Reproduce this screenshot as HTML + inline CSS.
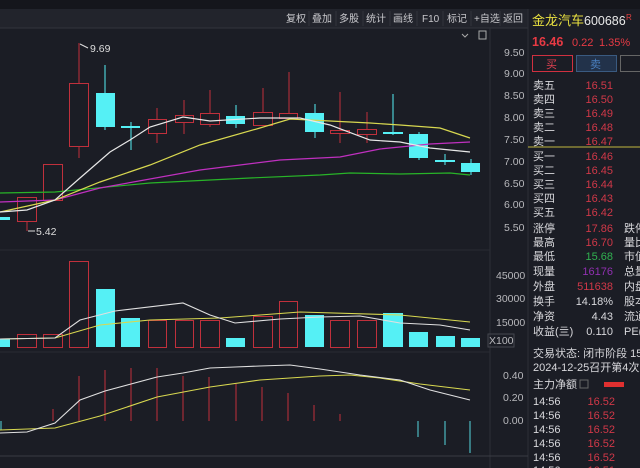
<!DOCTYPE html>
<html><head><meta charset="utf-8"><style>
html,body{margin:0;padding:0;background:#1b1d25;width:640px;height:468px;overflow:hidden}
svg{display:block}
text{font-family:"Liberation Sans","Noto Sans CJK SC",sans-serif}
</style></head><body>
<svg width="640" height="468" viewBox="0 0 640 468" xmlns="http://www.w3.org/2000/svg">
<rect width="640" height="468" fill="#1b1d25"/>
<rect width="640" height="9" fill="#15161c"/>
<rect x="0" y="9" width="528" height="19" fill="#22242c"/>
<line x1="0" y1="28" x2="528" y2="28" stroke="#33353d"/>
<g font-size="10" fill="#c8c8cc">
<text x="286" y="22">复权</text><text x="312" y="22">叠加</text><text x="339" y="22">多股</text><text x="366" y="22">统计</text><text x="393" y="22">画线</text><text x="422" y="22">F10</text><text x="447" y="22">标记</text><text x="474" y="22">+自选</text><text x="503" y="22">返回</text>
</g>
<g stroke="#33353d"><line x1="309" y1="11" x2="309" y2="26"/><line x1="336" y1="11" x2="336" y2="26"/><line x1="363" y1="11" x2="363" y2="26"/><line x1="390" y1="11" x2="390" y2="26"/><line x1="417" y1="11" x2="417" y2="26"/><line x1="443" y1="11" x2="443" y2="26"/><line x1="471" y1="11" x2="471" y2="26"/><line x1="500" y1="11" x2="500" y2="26"/></g>
<path d="M462 34l3 3 3-3" stroke="#aaa" fill="none"/><rect x="479" y="31" width="7" height="8" fill="none" stroke="#aaa"/>
<line x1="490" y1="28" x2="490" y2="468" stroke="#2c2e36"/>
<line x1="528" y1="9" x2="528" y2="468" stroke="#2c2e36"/>
<line x1="0" y1="250" x2="490" y2="250" stroke="#2a2c34"/>
<line x1="0" y1="352" x2="490" y2="352" stroke="#2a2c34"/>
<line x1="0" y1="456" x2="528" y2="456" stroke="#3a3c44"/>
<g font-size="10.5" fill="#b8b8bc">
<text x="504" y="56">9.50</text><text x="504" y="77">9.00</text><text x="504" y="99">8.50</text><text x="504" y="121">8.00</text><text x="504" y="143">7.50</text><text x="504" y="165">7.00</text><text x="504" y="187">6.50</text><text x="504" y="208">6.00</text><text x="504" y="231">5.50</text>
<text x="496" y="279">45000</text><text x="496" y="302">30000</text><text x="496" y="326">15000</text>
<text x="489" y="344">X100</text>
<text x="503" y="379">0.40</text><text x="503" y="401">0.20</text><text x="503" y="424">0.00</text>
</g>
<rect x="488" y="334" width="26" height="13" fill="none" stroke="#44464e"/>
<!-- candles -->
<g stroke-width="1">
<rect x="0" y="217" width="10" height="3" fill="#55f0f5"/>
<line x1="27" y1="221" x2="27" y2="231" stroke="#c0303c"/><rect x="17.5" y="197.5" width="19" height="24" fill="none" stroke="#c0303c"/>
<rect x="43.5" y="164.5" width="19" height="36" fill="none" stroke="#c0303c"/>
<line x1="79" y1="43" x2="79" y2="83" stroke="#c0303c"/><line x1="79" y1="146" x2="79" y2="158" stroke="#c0303c"/><rect x="69.5" y="83.5" width="19" height="63" fill="none" stroke="#c0303c"/>
<line x1="105" y1="65" x2="105" y2="130" stroke="#55f0f5"/><rect x="96" y="93" width="19" height="34" fill="#55f0f5"/>
<line x1="131" y1="122" x2="131" y2="150" stroke="#55f0f5"/><rect x="121" y="126" width="19" height="2" fill="#55f0f5"/>
<line x1="157" y1="108" x2="157" y2="143" stroke="#c0303c"/><rect x="148.5" y="119.5" width="18" height="14" fill="#1b1d25" stroke="#c0303c"/>
<line x1="184" y1="100" x2="184" y2="134" stroke="#c0303c"/><rect x="175.5" y="115.5" width="18" height="7" fill="#1b1d25" stroke="#c0303c"/>
<line x1="210" y1="90" x2="210" y2="127" stroke="#c0303c"/><rect x="200.5" y="113.5" width="19" height="11" fill="#1b1d25" stroke="#c0303c"/>
<line x1="236" y1="105" x2="236" y2="128" stroke="#55f0f5"/><rect x="226" y="116" width="19" height="8" fill="#55f0f5"/>
<line x1="263" y1="88" x2="263" y2="125" stroke="#c0303c"/><rect x="253.5" y="112.5" width="19" height="13" fill="#1b1d25" stroke="#c0303c"/>
<line x1="289" y1="72" x2="289" y2="118" stroke="#c0303c"/><rect x="279.5" y="113.5" width="18" height="5" fill="#1b1d25" stroke="#c0303c"/>
<line x1="315" y1="104" x2="315" y2="138" stroke="#55f0f5"/><rect x="305" y="113" width="19" height="19" fill="#55f0f5"/>
<line x1="340" y1="92" x2="340" y2="143" stroke="#c0303c"/><rect x="330.5" y="130.5" width="19" height="3" fill="#1b1d25" stroke="#c0303c"/>
<line x1="367" y1="112" x2="367" y2="143" stroke="#c0303c"/><rect x="357.5" y="129.5" width="19" height="5" fill="#1b1d25" stroke="#c0303c"/>
<line x1="393" y1="94" x2="393" y2="135" stroke="#55f0f5"/><rect x="383" y="132" width="20" height="2" fill="#55f0f5"/>
<line x1="419" y1="132" x2="419" y2="160" stroke="#55f0f5"/><rect x="409" y="134" width="19" height="24" fill="#55f0f5"/>
<line x1="445" y1="154" x2="445" y2="165" stroke="#55f0f5"/><rect x="435" y="160" width="20" height="2" fill="#55f0f5"/>
<line x1="471" y1="159" x2="471" y2="175" stroke="#55f0f5"/><rect x="461" y="163" width="19" height="9" fill="#55f0f5"/>
</g>
<g fill="none" stroke-width="1.2">
<polyline stroke="#28b428" points="0,193 55,192 150,183 250,178 320,175 350,173 400,174 450,173 470,175"/>
<polyline stroke="#c030c0" points="0,202 55,200 100,188 200,170 280,160 340,157 380,149 430,144 470,142"/>
<polyline stroke="#d8d850" points="0,212 55,200 100,182 150,165 200,145 260,128 290,119 330,121 370,123 400,125 440,128 470,138"/>
<polyline stroke="#e8e8e8" points="0,212 27,210 55,200 80,178 110,152 130,140 150,127 183,117 210,121 260,118 300,118 330,125 370,140 400,142 430,148 470,152"/>
</g>
<g font-size="10.5" fill="#ddd"><text x="90" y="52">9.69</text><text x="36" y="235">5.42</text></g>
<path d="M80 44l8 4M28 231h7" stroke="#ddd" fill="none"/>
<!-- volume -->
<g fill="none" stroke="#c0303c">
<rect x="17.5" y="334.5" width="19" height="13"/><rect x="43.5" y="334.5" width="19" height="13"/><rect x="69.5" y="261.5" width="19" height="86"/>
<rect x="148.5" y="320.5" width="18" height="27"/><rect x="175.5" y="320.5" width="18" height="27"/><rect x="200.5" y="320.5" width="19" height="27"/>
<rect x="253.5" y="316.5" width="19" height="31"/><rect x="279.5" y="301.5" width="18" height="46"/>
<rect x="330.5" y="320.5" width="19" height="27"/><rect x="357.5" y="320.5" width="19" height="27"/>
</g>
<g fill="#55f0f5">
<rect x="0" y="339" width="10" height="8"/><rect x="96" y="289" width="19" height="58"/><rect x="121" y="318" width="19" height="29"/><rect x="226" y="338" width="19" height="9"/><rect x="305" y="315" width="19" height="32"/><rect x="383" y="313" width="20" height="34"/><rect x="409" y="332" width="19" height="15"/><rect x="436" y="336" width="19" height="11"/><rect x="461" y="338" width="19" height="9"/>
</g>
<g fill="none" stroke-width="1.1">
<polyline stroke="#d8d850" points="0,339 55,338 100,325 150,320 220,318 260,315 300,312 400,315 470,322"/>
<polyline stroke="#e0e0e0" points="0,339 55,338 80,320 115,311 183,303 210,315 235,323 280,319 320,317 360,316 400,323 440,325 470,330"/>
</g>
<!-- lower -->
<g stroke="#c0303c">
<line x1="53" y1="409" x2="53" y2="421"/><line x1="79" y1="376" x2="79" y2="421"/><line x1="105" y1="370" x2="105" y2="421"/><line x1="131" y1="368" x2="131" y2="421"/><line x1="157" y1="368" x2="157" y2="421"/><line x1="183" y1="376" x2="183" y2="421"/><line x1="209" y1="377" x2="209" y2="421"/><line x1="236" y1="384" x2="236" y2="421"/><line x1="262" y1="387" x2="262" y2="421"/><line x1="288" y1="393" x2="288" y2="421"/><line x1="314" y1="405" x2="314" y2="421"/><line x1="340" y1="414" x2="340" y2="421"/>
</g>
<g stroke="#55d8e0"><line x1="418" y1="421" x2="418" y2="437"/><line x1="445" y1="421" x2="445" y2="445"/><line x1="470" y1="421" x2="470" y2="453"/><line x1="1" y1="421" x2="1" y2="430"/></g>
<g fill="none" stroke-width="1.1">
<polyline stroke="#d8d850" points="0,430 55,428 100,416 157,397 210,387 260,380 320,376 350,375 380,378 420,384 470,390"/>
<polyline stroke="#e0e0e0" points="0,433 27,432 55,423 80,400 105,391 131,384 157,377 183,373 210,368 235,367 260,366 290,365 320,369 360,375 400,380 430,390 470,400"/>
</g>
<!-- right panel -->
<text x="532" y="25" font-size="13" fill="#e8e040">金龙汽车</text>
<text x="584" y="25" font-size="12.5" fill="#e8e8e8">600686</text>
<text x="626" y="20" font-size="8" fill="#e04040">R</text>
<text x="532" y="46" font-size="12.5" font-weight="bold" fill="#e83a44">16.46</text>
<text x="572" y="46" font-size="11" fill="#e83a44">0.22</text>
<text x="599" y="46" font-size="11" fill="#e83a44">1.35%</text>
<rect x="532.5" y="55.5" width="40" height="16" fill="none" stroke="#d03040"/>
<text x="546" y="68" font-size="11" fill="#e04050">买</text>
<rect x="576.5" y="55.5" width="40" height="16" fill="#22324a" stroke="#3a5a80"/>
<text x="590" y="68" font-size="11" fill="#4a80c0">卖</text>
<rect x="620.5" y="55.5" width="24" height="16" fill="none" stroke="#666"/>
<line x1="528" y1="147" x2="640" y2="147" stroke="#c0b840"/>
<g font-size="11" fill="#d8d8dc">
<text x="533" y="89">卖五</text><text x="533" y="103">卖四</text><text x="533" y="117">卖三</text><text x="533" y="131">卖二</text><text x="533" y="145">卖一</text>
<text x="533" y="160">买一</text><text x="533" y="174">买二</text><text x="533" y="188">买三</text><text x="533" y="202">买四</text><text x="533" y="216">买五</text>
<text x="533" y="232">涨停</text><text x="533" y="246">最高</text><text x="533" y="260">最低</text><text x="533" y="275">现量</text><text x="533" y="290">外盘</text><text x="533" y="305">换手</text><text x="533" y="320">净资</text><text x="533" y="335">收益(亖)</text>
<text x="624" y="232">跌停</text><text x="624" y="246">量比</text><text x="624" y="260">市值</text><text x="624" y="275">总量</text><text x="624" y="290">内盘</text><text x="624" y="305">股本</text><text x="624" y="320">流通</text><text x="624" y="335">PE(</text>
<text x="533" y="357">交易状态: 闭市阶段 15</text>
<text x="533" y="371">2024-12-25召开第4次</text>
<text x="533" y="388">主力净额</text>
<text x="533" y="405">14:56</text><text x="533" y="419">14:56</text><text x="533" y="433">14:56</text><text x="533" y="447">14:56</text><text x="533" y="461">14:56</text><text x="533" y="474">14:56</text>
</g>
<rect x="580" y="380" width="8" height="8" fill="none" stroke="#666"/>
<rect x="604" y="382" width="20" height="5" fill="#e03030"/>
<g font-size="11" fill="#d03848" text-anchor="end">
<text x="613" y="89">16.51</text><text x="613" y="103">16.50</text><text x="613" y="117">16.49</text><text x="613" y="131">16.48</text><text x="613" y="145">16.47</text>
<text x="613" y="160">16.46</text><text x="613" y="174">16.45</text><text x="613" y="188">16.44</text><text x="613" y="202">16.43</text><text x="613" y="216">16.42</text>
<text x="613" y="232">17.86</text><text x="613" y="246">16.70</text>
<text x="613" y="260" fill="#30b050">15.68</text>
<text x="613" y="275" fill="#9030b0">16176</text>
<text x="613" y="290">511638</text>
<text x="613" y="305" fill="#d8d8dc">14.18%</text>
<text x="613" y="320" fill="#d8d8dc">4.43</text>
<text x="613" y="335" fill="#d8d8dc">0.110</text>
<text x="615" y="405">16.52</text><text x="615" y="419">16.52</text><text x="615" y="433">16.52</text><text x="615" y="447">16.52</text><text x="615" y="461">16.52</text><text x="615" y="474">16.51</text>
</g>
</svg>
</body></html>
